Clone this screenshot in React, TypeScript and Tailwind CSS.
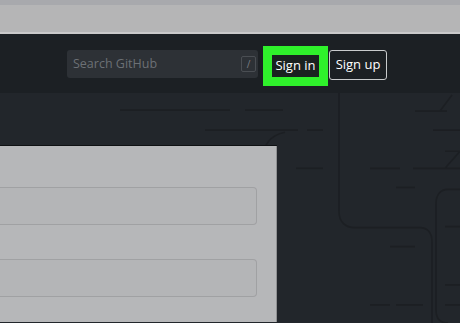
import React from 'react';

const BgLines: React.FC = () => (
  <svg className="absolute inset-0 w-full h-full pointer-events-none" viewBox="0 94 460 229" preserveAspectRatio="none" fill="none" stroke="#1c1f23" strokeWidth="1.6">
    <path d="M120 111H230M245 111H283" />
    <path d="M205 131H298M307 131H323" />
    <path d="M262 160C264 145 270 136 285 133" />
    <path d="M296 169H323" />
    <path d="M339 94V212C339 222 345 228 355 228H420C428 228 432 234 432 242V323" />
    <path d="M415 112H447M440 112L452 96" />
    <path d="M433 131H460" />
    <path d="M370 169H400M413 169H460M445 169L460 152M445 152H460" />
    <path d="M396 188H415" />
    <path d="M460 190H448C440 190 436 196 436 204V310C436 318 440 323 448 323" />
    <path d="M445 227H460M390 247H415M445 285H460" />
    <path d="M370 305H390M396 305H423M445 305H460" />
  </svg>
);

export default function App() {
  return (
    <div className="w-[460px] h-[323px] overflow-hidden flex flex-col bg-[#22262b]" style={{ fontFamily: '"Open Sans", "Noto Sans", sans-serif' }}>
      <div className="h-[5px] bg-[#a8a9ad]" />
      <div className="h-[29px] bg-[#b5b5b6] border-b-[2px] border-[#c9c9ca]" />

      {/* header */}
      <div className="h-[59px] bg-[#1c2024] flex items-center pl-[67px]">
        <div className="w-[191px] h-[28px] rounded-[3px] bg-[#2d3136] flex items-center pl-[6px] pr-[2px] mt-[1px]">
          <span className="text-[12.5px] text-[#6c7075] flex-1">Search GitHub</span>
          <span className="w-[15px] h-[16px] rounded-[2px] border border-[#4a4e53] text-[10px] text-[#7a7e83] flex items-center justify-center">/</span>
        </div>
        <div className="ml-[5px] w-[65px] h-[40px] bg-[#2ff12b] flex items-center justify-center mt-[4px]">
          <span className="w-[47px] h-[22px] bg-[#1a2220] text-white text-[13px] flex items-center justify-center leading-none">Sign in</span>
        </div>
        <button className="ml-[1px] w-[58px] h-[30px] rounded-[3px] border border-[#c9cbcd] text-white text-[13px] flex items-center justify-center leading-none mt-[2px]">
          Sign up
        </button>
      </div>

      {/* body */}
      <div className="relative flex-1">
        <BgLines />
        <div className="relative mt-[53px] w-[277px] h-[176px] bg-[#b6b7b9] border-r border-[#8f9092] shadow-[0_-1px_0_#0f1113] pt-[41px] pr-[19px] flex flex-col gap-[34px]">
          <div className="h-[38px] bg-[#b4b5b7] border border-l-0 border-[#a0a1a3] rounded-r-[4px]" />
          <div className="h-[38px] bg-[#b4b5b7] border border-l-0 border-[#a0a1a3] rounded-r-[4px]" />
        </div>
      </div>
    </div>
  );
}
